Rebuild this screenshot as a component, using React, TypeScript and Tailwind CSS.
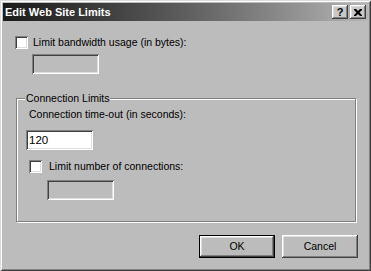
import React from "react";

const raised =
  "shadow-[inset_-1px_-1px_0_#404040,inset_1px_1px_0_#ffffff,inset_-2px_-2px_0_#808080,inset_2px_2px_0_#dedede]";
const sunken =
  "shadow-[inset_1px_1px_0_#808080,inset_-1px_-1px_0_#ffffff,inset_2px_2px_0_#404040,inset_-2px_-2px_0_#dedede]";

const Checkbox = () => <div className={`w-[13px] h-[13px] shrink-0 bg-white ${sunken}`} />;

const TextBox = ({ value, disabled }: { value?: string; disabled?: boolean }) => (
  <div
    className={`w-[67px] h-[20px] flex items-center pl-[3px] text-[11.5px] text-black ${sunken} ${
      disabled ? "bg-[#bcbcbc]" : "bg-white"
    }`}
  >
    {value}
  </div>
);

export default function App() {
  return (
    <div
      className="w-[371px] h-[271px] p-[3px] bg-[#bcbcbc] flex flex-col text-[10.5px] leading-[13px] text-black shadow-[inset_1px_1px_0_#dcdcdc,inset_-1px_-1px_0_#404040,inset_2px_2px_0_#ffffff,inset_-2px_-2px_0_#808080]"
      style={{ fontFamily: '"Liberation Sans", Arial, sans-serif' }}
    >
      {/* title bar */}
      <div className="h-[18px] flex items-center justify-between pl-[2px] pr-[2px] bg-linear-to-r from-[#1a1a1a] via-[#5e5e5e] to-[#b6b6b6]">
        <span className="text-white font-bold text-[11px]">Edit Web Site Limits</span>
        <div className="flex gap-[2px]">
          <div className={`w-[16px] h-[14px] bg-[#c8c8c8] flex items-center justify-center font-bold text-[11px] leading-none ${raised}`}>
            ?
          </div>
          <div className={`w-[16px] h-[14px] bg-[#c8c8c8] flex items-center justify-center ${raised}`}>
            <svg width="8" height="7" viewBox="0 0 8 7">
              <path d="M0 0h2l2 2 2-2h2v1l-2.5 2.5L8 6v1H6L4 5 2 7H0V6l2.5-2.5L0 1z" fill="#000" />
            </svg>
          </div>
        </div>
      </div>

      <div className="flex flex-col pl-[12px] pt-[15px]">
        <div className="flex items-center gap-[5px]">
          <Checkbox />
          <span>Limit bandwidth usage (in bytes):</span>
        </div>
        <div className="ml-[17px] mt-[5px]">
          <TextBox disabled />
        </div>

        {/* group box */}
        <div className="relative ml-[1px] mt-[24px] w-[340px] h-[124px] border border-[#808080] shadow-[1px_1px_0_#ffffff,inset_1px_1px_0_#ffffff]">
          <span className="absolute -top-[7px] left-[8px] px-[1px] bg-[#bcbcbc]">Connection Limits</span>
          <div className="flex flex-col pl-[9px] pt-[9px]">
            <span className="ml-[3px]">Connection time-out (in seconds):</span>
            <div className="mt-[9px]">
              <TextBox value="120" />
            </div>
            <div className="flex items-center gap-[7px] ml-[3px] mt-[10px]">
              <Checkbox />
              <span>Limit number of connections:</span>
            </div>
            <div className="ml-[21px] mt-[7px]">
              <TextBox disabled />
            </div>
          </div>
        </div>

        <div className="flex justify-end gap-[7px] mt-[13px] pr-[10px]">
          <div className="w-[76px] h-[23px] border border-black">
            <div className={`w-full h-full flex items-center justify-center ${raised}`}>OK</div>
          </div>
          <div className={`w-[76px] h-[23px] flex items-center justify-center ${raised}`}>Cancel</div>
        </div>
      </div>
    </div>
  );
}
